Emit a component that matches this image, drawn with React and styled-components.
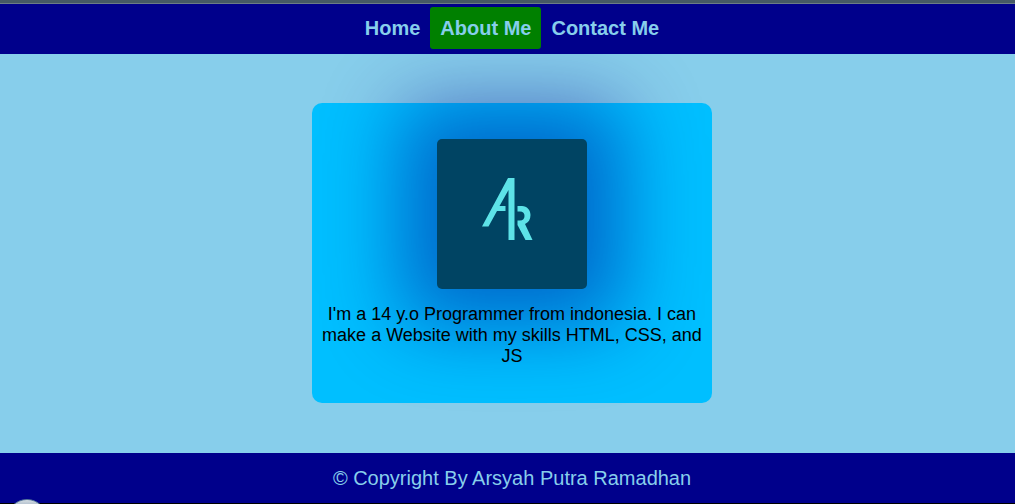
import React from "react";
import styled, { createGlobalStyle } from "styled-components";

const GlobalStyle = createGlobalStyle`
  * { box-sizing: border-box; }
  body {
    margin: 0;
    background: skyblue;
    font-family: "Liberation Sans", Arial, sans-serif;
  }
`;

const Page = styled.div`
  position: relative;
  display: flex;
  flex-direction: column;
  min-height: 100vh;
  overflow: hidden;
`;

const TopEdge = styled.div`
  height: 4px;
  background: #465a65;
  border-bottom: 1px solid #6c7d86;
`;

const Nav = styled.nav`
  position: relative;
  z-index: 1;
  display: flex;
  justify-content: center;
  padding: 3px 0 5px 9px;
  background: darkblue;
`;

const NavLink = styled.a`
  padding: 10px;
  border-radius: 3px;
  background: ${({ $active }) => ($active ? "green" : "transparent")};
  color: skyblue;
  font-size: 20px;
  font-weight: bold;
  line-height: 22px;
  text-decoration: none;
`;

const Main = styled.main`
  display: flex;
  flex: 1;
  justify-content: center;
  align-items: flex-start;
  padding: 49px 0 50px 9px;
`;

const Card = styled.section`
  display: flex;
  flex-direction: column;
  align-items: center;
  width: 100%;
  max-width: 400px;
  min-height: 300px;
  padding: 36px 10px;
  border-radius: 10px;
  background: deepskyblue;
`;

const Logo = styled.svg`
  width: 150px;
  height: 150px;
  border-radius: 5px;
  background: #004463;
  box-shadow: 0 0 80px 35px rgba(0, 0, 139, 0.46);
`;

const Bio = styled.p`
  position: relative;
  margin: 15px 0 0;
  color: black;
  font-size: 18px;
  line-height: 21px;
  text-align: center;
`;

const Footer = styled.footer`
  padding: 14px 0 13px 9px;
  border-bottom: 1px solid black;
  background: darkblue;
  color: skyblue;
  font-size: 20px;
  line-height: 23px;
  text-align: center;
`;

const Orb = styled.div`
  position: absolute;
  bottom: -35px;
  left: 7px;
  width: 40px;
  height: 40px;
  border: 1px solid #55779a;
  border-radius: 50%;
  background: linear-gradient(#d5dde3, #a9b8c8 6px);
`;

const links = ["Home", "About Me", "Contact Me"];

export default function App() {
  return (
    <Page>
      <GlobalStyle />
      <TopEdge />
      <Nav>
        {links.map((label) => (
          <NavLink key={label} href="#" $active={label === "About Me"}>
            {label}
          </NavLink>
        ))}
      </Nav>
      <Main>
        <Card>
          <Logo viewBox="0 0 150 150" role="img" aria-label="AR logo">
            <g fill="#5de3e8">
              <path d="M71 39H77.500V101H71.500V51L62.500 67H68.500V72H60L51.500 87.500H45Z" />
              <path d="M80.500 67H85C90 67 93.500 71 93.500 76C93.500 80.500 91.500 83.500 88 85L95.500 101H88.500L80.500 86V81.500H83C86 81.500 87.500 79.500 87.500 77C87.500 74 86 72.500 83 72.500H80.500Z" />
            </g>
          </Logo>
          <Bio>
            I'm a 14 y.o Programmer from indonesia. I can make a Website with my
            skills HTML, CSS, and JS
          </Bio>
        </Card>
      </Main>
      <Footer>© Copyright By Arsyah Putra Ramadhan</Footer>
      <Orb />
    </Page>
  );
}
